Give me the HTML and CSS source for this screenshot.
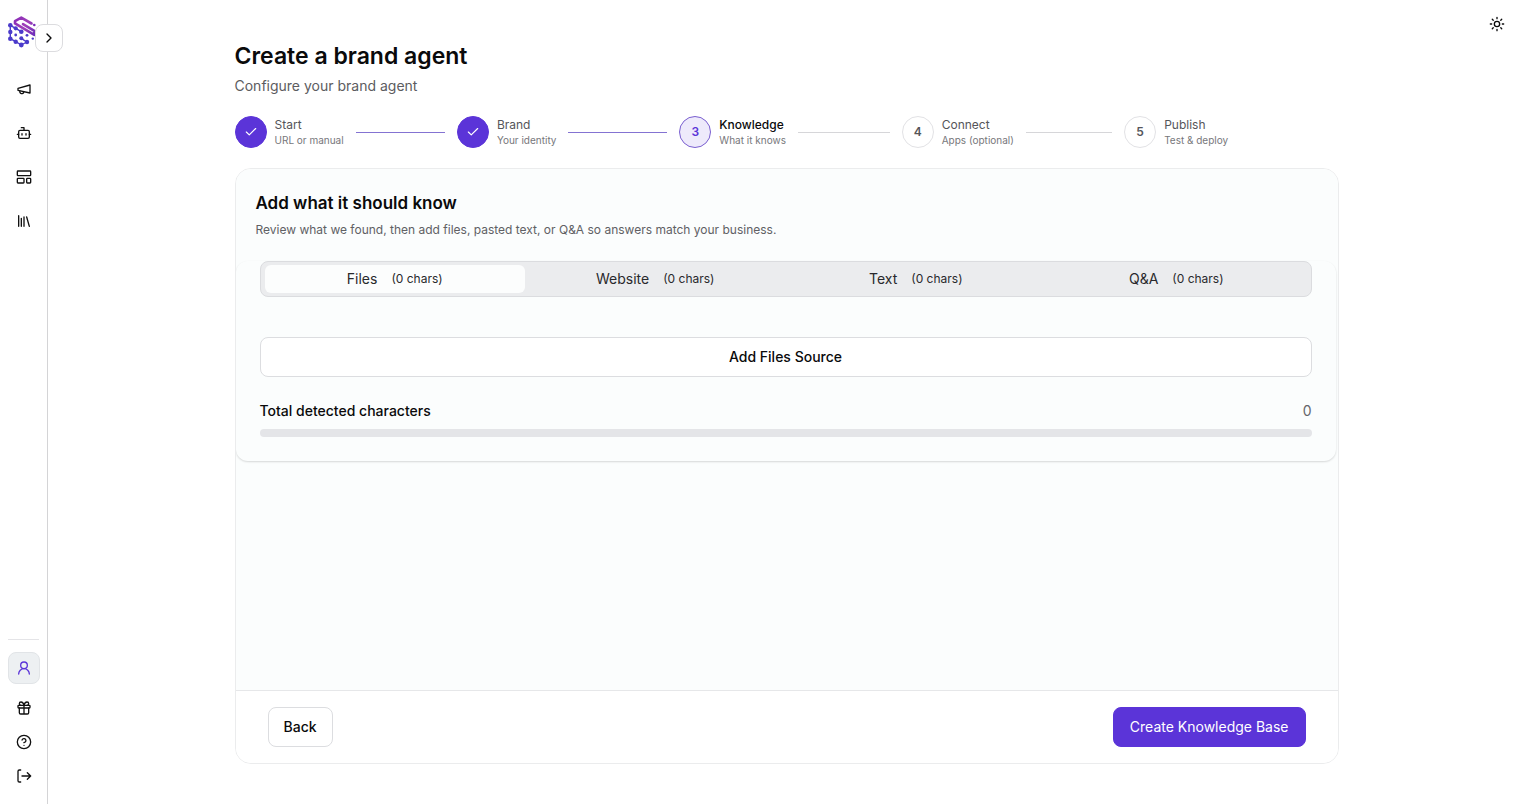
FILE: index.html
```html
<!DOCTYPE html>
<html lang="en">
<head>
<meta charset="utf-8">
<meta name="viewport" content="width=device-width, initial-scale=1">
<title>Create a brand agent</title>
<link rel="stylesheet" href="styles.css">
</head>
<body>
<div class="app">
  <aside class="sidebar">
    <a class="logo" href="#" aria-label="Home">
      <svg width="32" height="34" viewBox="0 0 32 34" fill="none" stroke-linecap="round" stroke-linejoin="round">
        <defs>
          <linearGradient id="mark" x1="6" y1="4" x2="27" y2="20" gradientUnits="userSpaceOnUse">
            <stop offset="0" stop-color="#8a2db8"/><stop offset="0.5" stop-color="#a040b8"/><stop offset="1" stop-color="#6a2cba"/>
          </linearGradient>
        </defs>
        <path stroke="url(#mark)" stroke-width="2.6" d="M23.500 8.500 13.300 2.600 7 6.200V8.400L26.300 19.800V15.800L15 9.200"/>
        <path stroke="#4b3bcb" stroke-width="1.400" d="M2.300 10.300v13.400l5.400 3 5.600 3.300 5.400-3M2.300 10.300l5.400 3 5.600 3.400M13.300 23.300l5.400 3.700"/>
        <g fill="#4b3bcb">
          <circle cx="2.300" cy="10.300" r="2.300"/><circle cx="2.300" cy="17" r="2.200"/><circle cx="2.300" cy="23.700" r="2.300"/>
          <circle cx="7.700" cy="13.300" r="2.100"/><circle cx="7.700" cy="20" r="1.400"/><circle cx="7.700" cy="26.700" r="2.200"/>
          <circle cx="13.300" cy="16.700" r="2.300"/><circle cx="13.300" cy="23.300" r="2"/><circle cx="13.300" cy="30" r="2.400"/>
          <circle cx="19" cy="27" r="2.200"/><circle cx="19" cy="20.300" r="1.400"/><circle cx="24.800" cy="23.600" r="1.200"/>
        </g>
        <circle cx="26.300" cy="10" r="1.300" fill="#7a2bb8"/>
      </svg>
    </a>
    <button class="expand" type="button" aria-label="Expand sidebar">
      <svg class="icon" viewBox="0 0 24 24"><path d="m9 18 6-6-6-6"/></svg>
    </button>
    <nav class="nav" aria-label="Main">
      <a href="#" aria-label="Campaigns"><svg class="icon" viewBox="0 0 24 24"><path d="m3 11 18-5v12L3 14v-3z"/><path d="M11.600 16.800a3 3 0 1 1-5.800-1.600"/></svg></a>
      <a href="#" aria-label="Agents"><svg class="icon" viewBox="0 0 24 24"><path d="M12 8V4H8"/><rect width="16" height="12" x="4" y="8" rx="2"/><path d="M2 14h2M20 14h2M15 13v2M9 13v2"/></svg></a>
      <a href="#" aria-label="Templates"><svg class="icon" viewBox="0 0 24 24"><rect width="20" height="7" x="2" y="3" rx="1"/><rect width="10" height="7" x="2" y="14" rx="1"/><rect width="6" height="7" x="16" y="14" rx="1"/></svg></a>
      <a href="#" aria-label="Library"><svg class="icon" viewBox="0 0 24 24"><path d="m16 6 4 14M12 6v14M8 8v12M4 4v16"/></svg></a>
    </nav>
    <nav class="nav-bottom" aria-label="Account">
      <a class="profile" href="#" aria-label="Profile"><svg class="icon" viewBox="0 0 24 24"><circle cx="12" cy="8" r="5"/><path d="M20 21a8 8 0 0 0-16 0"/></svg></a>
      <a href="#" aria-label="Rewards"><svg class="icon" viewBox="0 0 24 24"><rect x="3" y="8" width="18" height="4" rx="1"/><path d="M12 8v13M19 12v7a2 2 0 0 1-2 2H7a2 2 0 0 1-2-2v-7M7.500 8a2.500 2.500 0 0 1 0-5C11 3 12 8 12 8s1-5 4.500-5a2.500 2.500 0 0 1 0 5"/></svg></a>
      <a href="#" aria-label="Help"><svg class="icon" viewBox="0 0 24 24"><circle cx="12" cy="12" r="10"/><path d="M9.090 9a3 3 0 0 1 5.830 1c0 2-3 3-3 3M12 17h.01"/></svg></a>
      <a href="#" aria-label="Log out"><svg class="icon" viewBox="0 0 24 24"><path d="M7 21H5a2 2 0 0 1-2-2V5a2 2 0 0 1 2-2h2M17 17l5-5-5-5M22 12H9"/></svg></a>
    </nav>
  </aside>

  <main class="main">
    <button class="theme" type="button" aria-label="Toggle theme">
      <svg class="icon" viewBox="0 0 24 24"><circle cx="12" cy="12" r="4"/><path d="M12 2v2M12 20v2M4.930 4.930l1.410 1.410M17.660 17.660l1.410 1.410M2 12h2M20 12h2M6.340 17.660l-1.410 1.410M19.070 4.930l-1.410 1.410"/></svg>
    </button>
    <div class="content">
      <header>
        <h1>Create a brand agent</h1>
        <p class="subtitle">Configure your brand agent</p>
      </header>

      <ol class="steps">
        <li class="step done">
          <span class="badge"><svg class="check" viewBox="0 0 24 24"><path d="M20 6 9 17l-5-5"/></svg></span>
          <span class="label"><span class="name">Start</span><span class="hint">URL or manual</span></span>
        </li>
        <li class="step done">
          <span class="badge"><svg class="check" viewBox="0 0 24 24"><path d="M20 6 9 17l-5-5"/></svg></span>
          <span class="label"><span class="name">Brand</span><span class="hint">Your identity</span></span>
        </li>
        <li class="step current" aria-current="step">
          <span class="badge">3</span>
          <span class="label"><span class="name">Knowledge</span><span class="hint">What it knows</span></span>
        </li>
        <li class="step">
          <span class="badge">4</span>
          <span class="label"><span class="name">Connect</span><span class="hint">Apps (optional)</span></span>
        </li>
        <li class="step">
          <span class="badge">5</span>
          <span class="label"><span class="name">Publish</span><span class="hint">Test &amp; deploy</span></span>
        </li>
      </ol>

      <section class="card">
        <div class="card-head">
          <h2>Add what it should know</h2>
          <p>Review what we found, then add files, pasted text, or Q&amp;A so answers match your business.</p>
        </div>
        <div class="card-body">
          <div class="sources">
            <div class="tabs" role="tablist">
              <button class="tab" type="button" role="tab" aria-selected="true">Files <span>(0 chars)</span></button>
              <button class="tab" type="button" role="tab" aria-selected="false">Website <span>(0 chars)</span></button>
              <button class="tab" type="button" role="tab" aria-selected="false">Text <span>(0 chars)</span></button>
              <button class="tab" type="button" role="tab" aria-selected="false">Q&amp;A <span>(0 chars)</span></button>
            </div>
            <button class="btn add" type="button">Add Files Source</button>
            <div class="total"><span id="total-label">Total detected characters</span><span class="count">0</span></div>
            <div class="bar" role="progressbar" aria-labelledby="total-label" aria-valuenow="0"></div>
          </div>
        </div>
        <footer class="card-foot">
          <button class="btn" type="button">Back</button>
          <button class="btn primary" type="button">Create Knowledge Base</button>
        </footer>
      </section>
    </div>
  </main>
</div>
</body>
</html>
```
FILE: styles.css
```css
* { box-sizing: border-box; }

body {
  margin: 0;
  background: #fff;
  color: #0a0a0b;
  font-family: Inter, "Liberation Sans", sans-serif;
  font-size: 14px;
  line-height: 20px;
}

h1, h2, p, ol { margin: 0; padding: 0; }
button { font: inherit; color: inherit; cursor: pointer; }

.icon, .check {
  width: 16px;
  height: 16px;
  fill: none;
  stroke: currentColor;
  stroke-width: 2;
  stroke-linecap: round;
  stroke-linejoin: round;
  display: block;
}

.app { display: flex; min-height: 100vh; }

.sidebar {
  position: relative;
  width: 48px;
  flex: none;
  display: flex;
  flex-direction: column;
  padding: 15px 8px 12px;
  border-right: 1px solid #d4d4d6;
}
.logo { display: block; height: 34px; }
.logo svg { display: block; overflow: visible; }
.expand {
  position: absolute;
  top: 24px;
  right: -16px;
  width: 28px;
  height: 28px;
  display: grid;
  place-items: center;
  padding: 0;
  background: #fff;
  border: 1px solid #dcdcdf;
  border-radius: 8px;
}
.sidebar nav { display: flex; flex-direction: column; }
.sidebar nav a {
  width: 32px;
  height: 32px;
  display: grid;
  place-items: center;
  color: #111;
}
.nav { gap: 12px; margin-top: 24px; }
.nav-bottom {
  gap: 2px;
  margin-top: auto;
  padding-top: 12px;
  border-top: 1px solid #e4e4e7;
}
.sidebar nav .profile {
  margin-bottom: 6px;
  background: #edf0f2;
  border: 1px solid #e1e4e7;
  border-radius: 8px;
  color: #5b34d8;
}

.main {
  position: relative;
  flex: 1;
  min-width: 0;
  display: flex;
  justify-content: center;
  padding: 40px 24px;
}
.theme {
  position: absolute;
  top: 8px;
  right: 12px;
  width: 32px;
  height: 32px;
  display: grid;
  place-items: center;
  padding: 0;
  border: 0;
  background: none;
}
.content {
  width: 100%;
  max-width: 1104px;
  display: flex;
  flex-direction: column;
  gap: 20px;
}

h1 { font-size: 23px; line-height: 32px; font-weight: 600; }
.subtitle { margin-top: 4px; color: #5c5c60; }

.steps { display: flex; gap: 8px; list-style: none; }
.step {
  flex: 1 1 0;
  min-width: 0;
  display: flex;
  align-items: center;
  gap: 8px;
  padding-right: 4px;
}
.step:not(:last-child)::after {
  content: "";
  flex: 1;
  height: 1px;
  margin-left: 4px;
  background: #d6d6d9;
}
.step.done::after { background: #8473d2; }
.badge {
  width: 32px;
  height: 32px;
  flex: none;
  display: grid;
  place-items: center;
  border: 1px solid #e2e2e5;
  border-radius: 50%;
  color: #55555a;
  font-size: 12px;
  font-weight: 600;
}
.done .badge { background: #5b34d8; border-color: #5b34d8; color: #fff; }
.current .badge { background: #eeeafb; border-color: #7a5fd0; color: #5b34d8; }
.check { width: 14px; height: 14px; }
.label { display: flex; flex-direction: column; padding-top: 1px; white-space: nowrap; }
.name { font-size: 12px; line-height: 16px; color: #55555a; }
.current .name { color: #0a0a0b; font-weight: 500; }
.hint { font-size: 10px; line-height: 15px; color: #77777b; }

.card {
  flex: 1;
  display: flex;
  flex-direction: column;
  border: 1px solid #ebeced;
  border-radius: 16px;
  overflow: hidden;
}
.card-head { padding: 20px 20px 23px; background: #fbfdfd; }
h2 { font-size: 17px; line-height: 28px; font-weight: 600; }
.card-head p { margin-top: 5px; font-size: 12px; line-height: 16px; color: #606064; }
.card-body { flex: 1; padding-right: 2px; background: #fbfdfd; }

.sources {
  padding: 0 24px 24px;
  border-radius: 12px;
  box-shadow: 0 1px 2px #00000026;
}
.tabs {
  display: grid;
  grid-template-columns: repeat(4, 1fr);
  padding: 3px 4px;
  background: #ebecee;
  border: 1px solid #dbdcdf;
  border-radius: 8px;
}
.tab {
  display: flex;
  justify-content: center;
  align-items: center;
  gap: 14px;
  height: 28px;
  padding: 0;
  border: 0;
  border-radius: 6px;
  background: none;
  color: #29292c;
}
.tab[aria-selected="true"] { background: #fcfdfd; }
.tab span { font-size: 12px; }

.btn {
  height: 40px;
  padding: 0 15px;
  background: #fff;
  border: 1px solid #dcdde0;
  border-radius: 8px;
  font-weight: 500;
}
.btn.primary { padding: 0 16px; background: #5b34d8; border-color: #5b34d8; color: #fff; font-weight: 400; }
.add { display: block; width: 100%; margin-top: 40px; }
.total { display: flex; justify-content: space-between; margin-top: 24px; font-weight: 500; }
.count { font-weight: 400; color: #66666a; }
.bar { height: 8px; margin-top: 8px; border-radius: 4px; background: #e4e5e8; }

.card-foot {
  display: flex;
  justify-content: space-between;
  padding: 16px 32px;
  border-top: 1px solid #e6e7e9;
  background: #fff;
}
```
